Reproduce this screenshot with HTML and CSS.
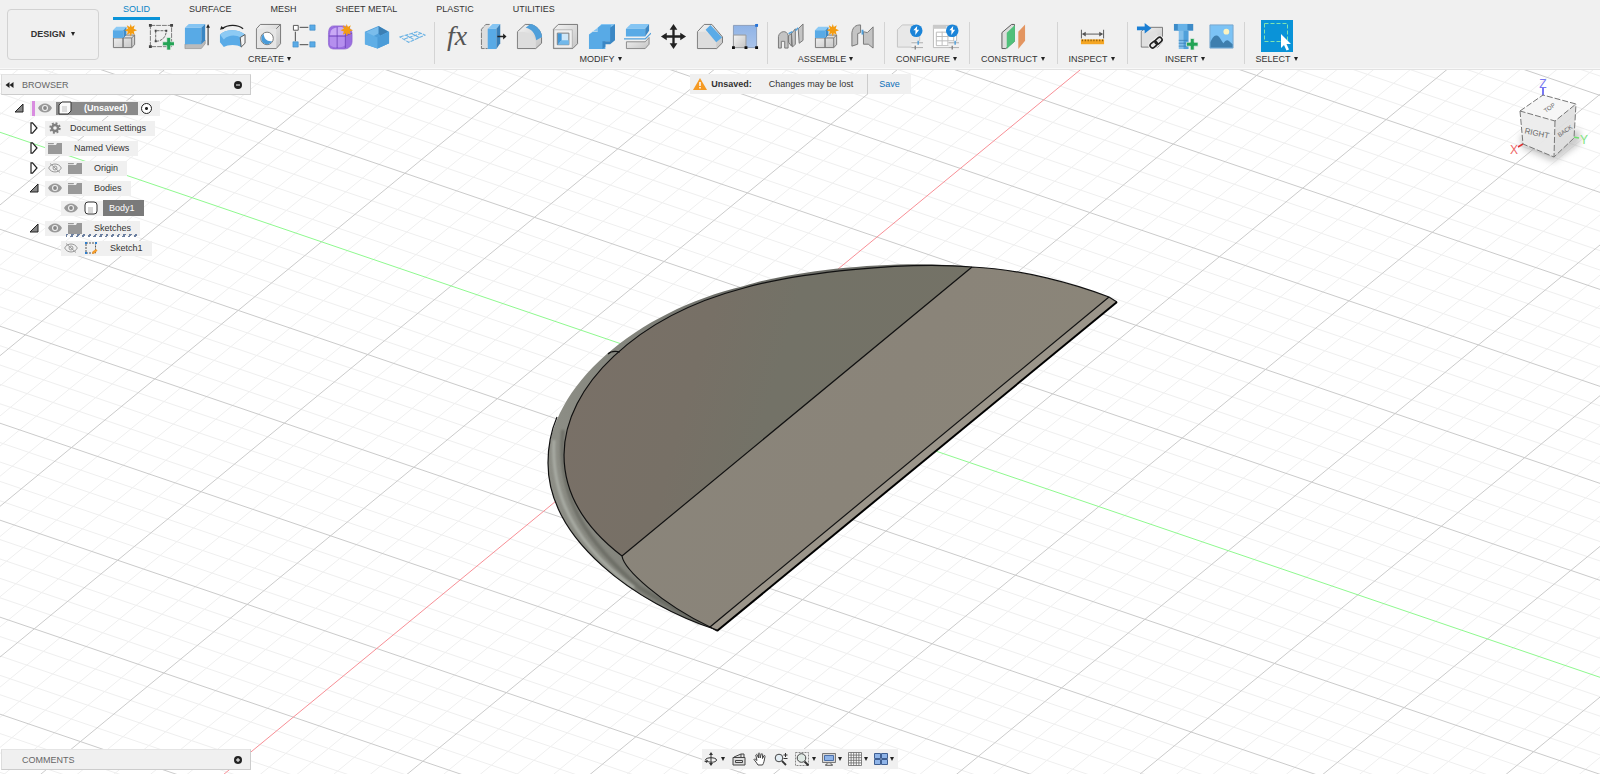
FILE: index.html
```html
<!DOCTYPE html>
<html lang="en">
<head>
<meta charset="utf-8">
<title>(Unsaved) - Design</title>
<meta name="viewport" content="width=device-width, initial-scale=1">
<link rel="stylesheet" href="styles.css">
</head>
<body>
<svg class="defs" aria-hidden="true">
  <defs>
    <linearGradient id="face-dark" x1="0" y1="0.4" x2="1" y2="0.6">
      <stop offset="0" stop-color="#797067"/><stop offset="0.3" stop-color="#777066"/><stop offset="0.5" stop-color="#737267"/><stop offset="1" stop-color="#747266"/>
    </linearGradient>
    <linearGradient id="face-light" x1="0" y1="0.3" x2="1" y2="0.7">
      <stop offset="0" stop-color="#8a857b"/><stop offset="0.5" stop-color="#8a8479"/><stop offset="1" stop-color="#8b8679"/>
    </linearGradient>
    <linearGradient id="rim" gradientUnits="userSpaceOnUse" x1="548" y1="0" x2="720" y2="0">
      <stop offset="0" stop-color="#8d8e86"/><stop offset="0.5" stop-color="#83847c"/><stop offset="1" stop-color="#6d6e68"/>
    </linearGradient>
    <linearGradient id="blue" x1="0" y1="0" x2="1" y2="1"><stop offset="0" stop-color="#76bcf0"/><stop offset="1" stop-color="#4a9bd8"/></linearGradient>
    <linearGradient id="grey" x1="0" y1="0" x2="1" y2="1"><stop offset="0" stop-color="#f4f4f4"/><stop offset="1" stop-color="#c4c4c4"/></linearGradient>
    <linearGradient id="scale-blue" x1="0" y1="0" x2="0" y2="1"><stop offset="0" stop-color="#8fb3e6"/><stop offset="1" stop-color="#a9c3ea"/></linearGradient>
    <filter id="soft" x="-50%" y="-50%" width="200%" height="200%"><feGaussianBlur stdDeviation="3"/></filter>
    <filter id="glint" x="-50%" y="-50%" width="200%" height="200%"><feGaussianBlur stdDeviation="1"/></filter>

    <symbol id="star" viewBox="0 0 12 12"><path fill="#f39c12" d="M6 0l1 3 2.800-1.700L8.800 4.500 12 6 8.800 7.300l1 3L7 8.900 6 12 5 8.900l-2.800 1.400 1-3L0 6l3.200-1.500-1-3.200L5 3z"/></symbol>
    <symbol id="component" viewBox="0 0 28 28">
      <path fill="url(#grey)" stroke="#777" d="M2.500 15.500h10v10h-10zM12.500 15.500l3-3h9v10l-3 3h-9zM21.500 15.500l3-3M12.500 15.500h9v10"/>
      <path fill="#8ccaf5" d="M2 7.500L5.500 4H16l-3 3.500z"/><path fill="#58aae6" d="M2 7.500h11v8H2z"/><path fill="#3b8ccb" d="M13 7.500L16 4v8l-3 3.500z"/>
      <use href="#star" x="14" y="1" width="13" height="13"/>
    </symbol>
    <symbol id="sketch" viewBox="0 0 28 28">
      <path fill="none" stroke="#777" stroke-dasharray="5 1" d="M3.500 2.500h22v22h-22z"/>
      <path fill="none" stroke="#666" stroke-dasharray="3 1" d="M9 19V8h11c0 6-4 11-11 11"/>
      <path fill="#444" d="M2 1h3v3H2zM24 1h3v3h-3zM2 23h3v3H2zM8 7h2v2H8zM8 18h2v2H8zM19 7h2v2h-2z"/>
      <path fill="#23a455" stroke="#f0f0f0" stroke-width=".7" d="M20.500 15h4v4.500h4v4h-4v4.500h-4v-4.500h-4.300v-4h4.300z"/>
    </symbol>
    <symbol id="extrude" viewBox="0 0 28 28">
      <path fill="#bbb" stroke="#888" stroke-width=".6" d="M2 22v4.500h17l4-5V18z"/>
      <path fill="#85c5f3" d="M2 5l4-4h17l-4 4z"/><path fill="#58aae6" d="M2 5h17v17H2z"/><path fill="#3a86c3" d="M19 5l4-4v17l-4 4z"/>
      <path fill="#222" d="M25.500 23V5H24l2-4 2 4h-1.500v18z"/>
    </symbol>
    <symbol id="revolve" viewBox="0 0 28 28">
      <path fill="none" stroke="#222" stroke-width="1.300" d="M3 6c6-4.500 16-5 22 0"/><path fill="#222" d="M1 7l1.500-4 3 3z"/>
      <path fill="#5aabe7" d="M1 12c6-6 19-6 26 0l-4 13c-4-3-14-3-18 0L1 20z"/><path fill="#8dcaf4" d="M1 12c6-6 19-6 26 0l-4.500 3.500C18 12 10 12 5 17z"/>
      <path fill="#f3f3f3" stroke="#555" d="M22 15l5-3v9l-4 4z"/>
    </symbol>
    <symbol id="hole" viewBox="0 0 28 28">
      <path fill="url(#grey)" stroke="#777" d="M1.500 6l4-4.500h21v20l-4.500 5H1.500zM22 6l4.500-4.500"/><path fill="#e6e6e6" d="M2 6h20v20H2z"/>
      <circle cx="12.500" cy="16" r="6.500" fill="#fff" stroke="#777"/><path fill="#4a9bd8" d="M9 11.200a6 6 0 1 0 8.900 7.500c-5 1-8.500-2-8.900-7.500z"/>
    </symbol>
    <symbol id="array" viewBox="0 0 28 28">
      <path stroke="#444" d="M9 4.500h9M4.500 9v10M9 22.500h9"/><path fill="#fff" stroke="#555" d="M2.500 2.500h5v5h-5z"/>
      <path fill="#5aabe7" stroke="#3a86c3" stroke-width=".6" d="M19.500 2h5.500v5.500h-5.500zM2 19.500h5.500V25H2zM19.500 19.500H25V25h-5.500z"/>
    </symbol>
    <symbol id="form" viewBox="0 0 28 28">
      <path fill="#9a6ee0" stroke="#8a60d0" stroke-width=".7" d="M7 3h9c6 0 10 3 10 9v7c0 5-4 8-8 8H8c-5 0-6.500-2-6.500-7v-8C1.500 6 3 3 7 3z"/>
      <path fill="#c9a9f5" d="M4 8c3-4 12-5 15-2v7H3z"/><path fill="#b58fee" d="M3 14h16v9c-4 3-12 3-16 0z"/>
      <path fill="none" stroke="#6a3fb5" stroke-width=".8" d="M2 13.500h17l7-3M10.500 4v22M19 6v20"/>
      <use href="#star" x="14" y="1" width="13" height="13"/>
    </symbol>
    <symbol id="base" viewBox="0 0 28 28">
      <path fill="#4f9fda" d="M2 9l14-6 11 6v12l-12 5.500L2 22z"/><path fill="#3b7fb4" d="M16 3l10 6-8 4-2-2z"/><path fill="#7abdec" d="M3 9.500L16 4v7l-6 3z"/><path fill="#5faee6" d="M2 9l13 6 12-6v12l-12 5.500L2 22z"/><path fill="#4b9cd8" d="M15 15l12-6v12l-12 5.500z"/>
    </symbol>
    <symbol id="plane-grid" viewBox="0 0 28 28"><path fill="none" stroke="#6ab2e4" stroke-width="1.100" stroke-dasharray="4 1" d="M1 14.500L19 9l8 3.500L10 20zM5.500 16.500l17-5.500M7 12.500l9 5M13 11l8 4"/></symbol>
    <symbol id="presspull" viewBox="0 0 28 28">
      <path fill="#ddd" stroke="#777" stroke-dasharray="6 1" d="M10 1.500H6l-4.500 5v20H8"/><path fill="#85c5f3" d="M8 6l5-5h8l-4 5z"/><path fill="#58aae6" d="M8 6h9v21H8z"/><path fill="#397fb8" d="M17 6l4-5v20l-4 6z"/>
      <path fill="#222" d="M18 13.200h6V11l3.500 3-3.500 3v-2.300h-6z"/>
    </symbol>
    <symbol id="fillet" viewBox="0 0 28 28"><path fill="url(#grey)" stroke="#777" d="M1.500 9l8-7.500h5c7 1 12 7 12 13.500v6l-6 5.500h-19z"/><path fill="#ddd" d="M2 9h3c9 0 14 4 15.500 10v7H2z"/><path fill="#4f9fda" d="M10 5l5-4c7 1 12 8 12 13.500L21 18C20 11 16 6 10 5z"/></symbol>
    <symbol id="shell" viewBox="0 0 28 28"><path fill="url(#grey)" stroke="#777" d="M1.500 6.500l5-5h20v20l-5 5h-20z"/><path fill="#efefef" stroke="#999" stroke-width=".6" d="M2 7h19v19H2z"/><path fill="#cfe7f8" stroke="#777" d="M5.500 10.500h12v12h-12z"/><path fill="#4497d6" d="M6 11h4v7l-4 4.500z"/><path fill="#72b8ea" d="M10 18h7.500v4.500H6z"/></symbol>
    <symbol id="combine" viewBox="0 0 28 28"><path fill="#85c5f3" d="M1 12l4-3.500h5V5l4-4h14l-4 4H10z"/><path fill="#58aae6" d="M1 12l4-3h5V5l4-3h10v17h-6v8H1z"/><path fill="#3b87c4" d="M23 5l5-4v17l-5 4h-5v2.500L15 27v-8h8z"/></symbol>
    <symbol id="split" viewBox="0 0 28 28"><path fill="#85c5f3" d="M2 6l5-5h19l-4 5z"/><path fill="#58aae6" d="M2 6h20v8H2z"/><path fill="#3b87c4" d="M22 6l4-5v7l-4 6z"/><path fill="none" stroke="#4f9fda" stroke-width="1.300" d="M0 16.500h22l6-6"/><path fill="url(#grey)" stroke="#888" d="M2.500 19.500H22l4-4.500v7l-4 4.500H2.500z"/></symbol>
    <symbol id="move" viewBox="0 0 28 28"><path fill="#222" d="M14 1l4 6h-2.800v5.800H21V10l6 4-6 4v-2.800h-5.800V21H18l-4 6-4-6h2.800v-5.800H7V18l-6-4 6-4v2.800h5.800V7H10z"/></symbol>
    <symbol id="chamfer" viewBox="0 0 28 28"><path fill="url(#grey)" stroke="#777" d="M1.500 9l7-7.500h8l11 13v6l-6 6h-20z"/><path fill="#ddd" d="M2 9h8l11 11v6H2z"/><path fill="#5aabe7" d="M10 7l5-5 12 13-6 5z"/></symbol>
    <symbol id="scale" viewBox="0 0 28 28"><path fill="url(#scale-blue)" stroke="#8a9cb8" d="M1.500 2.500h24v23h-24z"/><path fill="url(#grey)" stroke="#999" d="M1.500 12.500h13v13h-13z"/><path fill="#111" d="M0 24h3v3H0zM13 24h3v3h-3zM24 24h3v3h-3z"/><path fill="#2673d8" d="M24 1h3v3h-3z"/></symbol>
    <symbol id="joint" viewBox="0 0 28 28"><path fill="#c4c4c4" stroke="#777" d="M1.500 26V14c1-6 9-7 10-1v13H8v-7H4.500v7zM15 11l4-5v16l-3 3zM22 6l5-5v17l-4 3zM12 13l3-2v13l-3-4z"/><path stroke="#4f9fda" stroke-width="1.500" d="M12 11l4-2M19 8l3-3"/></symbol>
    <symbol id="asbuilt" viewBox="0 0 28 28"><path fill="#c4c4c4" stroke="#777" d="M3 24V10c1-6 4-8 9-8v8l-3 1v11zM15 9l4 1 6-6v22l-5-4h-5z"/><path stroke="#4f9fda" stroke-width="2" d="M14 7v5"/></symbol>
    <symbol id="badge" viewBox="0 0 14 14"><circle cx="7" cy="7" r="6.500" fill="#1b84d8"/><path fill="#fff" d="M8 2L4 6.500h2.200L6 11.500l4-5.500H7.600z"/></symbol>
    <symbol id="configure" viewBox="0 0 28 28"><path fill="#e8e8e8" stroke="#c4c4c4" d="M1.500 7l5-5h12l6 6v12l-4 5h-19z"/><use href="#badge" x="14" y="1" width="14" height="14"/><path stroke="#f0f0f0" stroke-width="8" d="M16 23h12"/><path stroke="#999" stroke-width=".8" d="M16 20.500h12M16 25.500h12"/><path stroke="#4f9fda" stroke-width="1.500" d="M23 18.500v4"/><path stroke="#888" stroke-width="1.500" d="M20 23.500v4"/></symbol>
    <symbol id="table" viewBox="0 0 28 28"><path fill="#fff" stroke="#bbb" d="M1.500 2.500h24v23h-24z"/><path fill="#c9c9c9" d="M1 2h14v4H1z"/><path fill="none" stroke="#bbb" d="M4.500 9.500h18v14h-18zM4.500 14h18M4.500 18.500h18M10.500 9v14M16.500 9v14"/><use href="#badge" x="14" y="1" width="14" height="14"/><path stroke="#f0f0f0" stroke-width="8" d="M17 23h11"/><path stroke="#999" stroke-width=".8" d="M17 20.500h11M17 25.500h11"/><path stroke="#4f9fda" stroke-width="1.500" d="M24 18.500v4"/><path stroke="#888" stroke-width="1.500" d="M21 23.500v4"/></symbol>
    <symbol id="planes" viewBox="0 0 28 28"><path fill="#ddd" stroke="#555" d="M2 26.500V10L12 1.500h3V19L6 26.500z"/><path fill="#4fc07a" d="M7 10l8.500-8v17L7 27z"/><path fill="#e39560" d="M19 9l7-7.500v17L19 27z"/></symbol>
    <symbol id="measure" viewBox="0 0 28 28"><path stroke="#555" d="M2.500 7v9M25.500 7v9M4 11.500h20"/><path fill="#555" d="M3 11.500L7 9v5zM25 11.500L21 9v5z"/><path fill="#f5a623" d="M2 17h24v5H2z"/><path stroke="#7a4e00" stroke-dasharray="1 2" stroke-width="2" d="M3 18h23"/></symbol>
    <symbol id="insert" viewBox="0 0 28 28"><path fill="url(#grey)" stroke="#777" d="M5.500 9l4-4.500h18V20l-5 5h-17z"/><path fill="#e0e0e0" d="M6 9h16v15H6z"/><path fill="#1b7fd4" d="M1 3.500h8V0l7 5.500L9 11V7.500H1z"/><g fill="none" stroke="#f0f0f0" stroke-width="4"><rect x="14" y="20" width="8" height="5" rx="2.500" transform="rotate(-40 18 22)"/><rect x="19" y="16" width="8" height="5" rx="2.500" transform="rotate(-40 23 18)"/></g><g fill="none" stroke="#222" stroke-width="1.700"><rect x="14" y="20" width="8" height="5" rx="2.500" transform="rotate(-40 18 22)"/><rect x="19" y="16" width="8" height="5" rx="2.500" transform="rotate(-40 23 18)"/></g></symbol>
    <symbol id="bolt" viewBox="0 0 28 28"><path fill="#3d8bc8" d="M2 1h20v7H2z"/><path fill="#66b2e8" d="M6 1h10v7H6z"/><path fill="#82bfeb" d="M7 8h10v19H7z"/><path fill="#4f9fda" d="M12 8h5v19h-5z"/><path stroke="#3d7fb5" stroke-width=".8" d="M7 18h9M7 21h9M7 24h9"/><path fill="#23a455" stroke="#f0f0f0" stroke-width=".7" d="M19 16h4v4h4v4h-4v4h-4v-4h-4v-4h4z"/></symbol>
    <symbol id="picture" viewBox="0 0 28 28"><path fill="#7cc3f5" stroke="#7aa7cc" d="M2 2h24v24H2z"/><path fill="#3f7fae" d="M2.500 20C5 14 7 13 9 13c3 0 5 6 7 8 2-3 4-4 6-2l3.500 3v3.500h-23z"/><circle cx="19" cy="9" r="3" fill="#fbf3c0"/></symbol>
    <symbol id="select" viewBox="0 0 32 32"><path fill="#0a93d8" d="M0 0h32v32H0z"/><path fill="none" stroke="#7fe3b0" stroke-dasharray="4 2" d="M3.500 3.500h23v18h-23z"/><path fill="#fff" d="M20 14v14l3-3 2.500 5.500 2.500-1-2.500-5.500H30z"/></symbol>

    <symbol id="eye" viewBox="0 0 14 10"><path fill="#999" d="M0 5c3-6 11-6 14 0-3 6-11 6-14 0z"/><circle cx="7" cy="5" r="3" fill="#f0f0f0"/><circle cx="7" cy="5" r="1.900" fill="#888"/></symbol>
    <symbol id="eye-off" viewBox="0 0 14 10"><path fill="none" stroke="#999" d="M.7 5C3-.3 11-.3 13.300 5 11 10.300 3 10.300.7 5zM2 .5l10 9"/><circle cx="7" cy="5" r="2" fill="none" stroke="#999"/></symbol>
    <symbol id="folder" viewBox="0 0 14 12"><path fill="#999" d="M0 3h8l1-2h5v11H0z"/><path fill="#999" d="M0 1h6l-.5 1.200H0z"/></symbol>
    <symbol id="gear" viewBox="0 0 14 14"><circle cx="7" cy="7" r="4.700" fill="none" stroke="#808080" stroke-width="2" stroke-dasharray="1.900 1.790"/><circle cx="7" cy="7" r="3" fill="none" stroke="#808080" stroke-width="2.400"/></symbol>
    <symbol id="cube" viewBox="0 0 14 14"><path fill="#fafafa" stroke="#333" d="M1 4l3-3h9v9l-3 3H1z"/><path fill="#dcdcdc" d="M4 5h5v6H4z"/></symbol>
    <symbol id="body" viewBox="0 0 14 14"><rect x="1" y="1" width="12" height="12" rx="3" fill="#fff" stroke="#333"/><path fill="#d8d8d8" d="M4 6h5v6H4z"/></symbol>
    <symbol id="sketch-small" viewBox="0 0 14 14"><path fill="none" stroke="#555" stroke-dasharray="2 1" d="M2 2h9.500v10H2z"/><path fill="#2f7fd0" d="M1 1h2v2H1zM11 1h2v2h-2zM1 11h2v2H1z"/><path fill="#f39c2b" d="M8 13l.5-2.500L12 8l1.500 1.500L10.500 12.500z"/></symbol>
    <symbol id="open" viewBox="0 0 10 10"><path fill="#888" stroke="#222" d="M9 1v8H1z"/></symbol>
    <symbol id="closed" viewBox="0 0 8 12"><path fill="#fff" stroke="#222" stroke-width="1.200" d="M1 .8h1.500L7 6l-4.500 5.200H1z"/></symbol>
    <symbol id="orbit" viewBox="0 0 14 14"><path fill="none" stroke="#333" d="M7 2v10M1.500 8c0-3 11-3 11 0s-8 2.500-10 1"/><path fill="#333" d="M7 0l2 3H5zM7 14l2-3H5zM0 9l4-1-1 3z"/></symbol>
    <symbol id="look" viewBox="0 0 14 14"><path fill="#ddd" stroke="#444" d="M1 5.500h12v7.500H1zM3.500 8.500h7v2h-7zM2 5l7-3v3M9 2h3v3"/></symbol>
    <symbol id="pan" viewBox="0 0 14 14"><path fill="#fff" stroke="#444" d="M5 13C4 11 2 9 1 7.500c.5-1 1.500-.5 3 1L2.800 3c.7-.9 1.300-.5 1.600.3L5.500 6 5.300 1.500c.6-.8 1.300-.6 1.500.2L7.200 6l1-4c.7-.7 1.400-.4 1.400.5L9.500 6.500l1.400-2.800c.8-.5 1.300 0 1.100.8C11.300 8 11 11 9.500 13z"/></symbol>
    <symbol id="zoom" viewBox="0 0 14 14"><circle cx="5" cy="6" r="3.800" fill="#e4eef5" stroke="#444"/><path stroke="#333" stroke-width="1.800" d="M8 9l4 4"/><path stroke="#333" d="M9.500 3h4M11.500 1v4M9.500 6.500h4"/></symbol>
    <symbol id="fit" viewBox="0 0 14 14"><path fill="none" stroke="#888" stroke-dasharray="2 1" d="M.5.500h13v13H.5z"/><circle cx="6.500" cy="6" r="4.300" fill="#dfe9e4" stroke="#444"/><path stroke="#333" stroke-width="2" d="M9.500 9.500l4 4"/></symbol>
    <symbol id="display" viewBox="0 0 14 14"><path fill="#d5d5d5" stroke="#777" d="M.5 1.500h13v9H.5zM5 10.500v2H3.500v1h7v-1H9v-2"/><path fill="#8fb4e8" stroke="#4b6fa8" d="M2.500 3.500h9v5h-9z"/></symbol>
    <symbol id="grid-icon" viewBox="0 0 14 14"><path fill="#fff" stroke="#666" stroke-width=".8" d="M.5.500h13v13H.5zM.5 3.100h13M.5 5.700h13M.5 8.300h13M.5 10.900h13M3.100.5v13M5.700.5v13M8.300.5v13M10.900.5v13"/></symbol>
    <symbol id="views" viewBox="0 0 14 14"><path fill="#8fb4e8" stroke="#3f5f92" d="M.5 1.500h6v5h-6zM7.500 1.500h6v5h-6zM.5 7.500h6v5h-6zM7.500 7.500h6v5h-6z"/></symbol>
  </defs>
</svg>

<div class="app">
  <svg class="scene" viewBox="0 0 1600 774" preserveAspectRatio="xMidYMid slice" role="img" aria-label="Half disc body on the ground plane">
    <path id="grid-minor" class="grid-minor"/>
    <path id="grid-major" class="grid-major"/>
    <path id="axis-x" class="axis-x"/>
    <path id="axis-y" class="axis-y"/>
    <path fill="url(#rim)" d="M717 630C636 604 548 540 548 463C548 386 637 311 744 286C797 269 905 259 972 267L800 480z"/>
    <path fill="none" stroke="#5f6059" stroke-width="4" opacity=".6" filter="url(#glint)" d="M563 430C556 500 590 545 640 588L700 623"/>
    <path fill="none" stroke="#a9aca4" stroke-width="3" filter="url(#glint)" d="M554 440C550 510 590 556 634 588"/>
    <path fill="url(#face-dark)" d="M972 267C905 261 797 273 744 288C637 316 564 386 564 455C564 497 588 530 622 556z"/>
    <path fill="url(#face-light)" d="M972 267C1022 269 1075 284 1109 297L710 627C660 603 624 569 622 556z"/>
    <path fill="#9b958a" d="M1109 297L1117 302 717 631 710 627z"/>
    <g class="edge">
      <path d="M717 630C636 604 548 540 548 463C548 446 551 431 557 417"/>
      <path d="M972 267C905 261 797 273 744 288C637 316 564 386 564 455C564 497 588 530 622 556C624 569 660 603 710 627"/>
      <path d="M972 267C1022 269 1075 284 1109 297L1117 302M972 267L622 556M1109 297L710 627L717 631M608 354q4-4 12-2"/>
      <path class="heavy" d="M1117 302L717 631"/>
    </g>
  </svg>

  <header class="toolbar">
    <button class="workspace caret" type="button">DESIGN</button>
    <div class="ribbon">
      <nav class="tabs" aria-label="Toolbar tabs">
        <button class="tab active" type="button">SOLID</button>
        <button class="tab" type="button">SURFACE</button>
        <button class="tab" type="button">MESH</button>
        <button class="tab" type="button">SHEET METAL</button>
        <button class="tab" type="button">PLASTIC</button>
        <button class="tab" type="button">UTILITIES</button>
      </nav>
      <div class="groups">
        <section class="group">
          <div class="tools">
            <button class="tool" type="button" aria-label="New component"><svg><use href="#component"/></svg></button>
            <button class="tool" type="button" aria-label="Create sketch"><svg><use href="#sketch"/></svg></button>
            <button class="tool" type="button" aria-label="Extrude"><svg><use href="#extrude"/></svg></button>
            <button class="tool" type="button" aria-label="Revolve"><svg><use href="#revolve"/></svg></button>
            <button class="tool" type="button" aria-label="Hole"><svg><use href="#hole"/></svg></button>
            <button class="tool" type="button" aria-label="Pattern"><svg><use href="#array"/></svg></button>
            <button class="tool" type="button" aria-label="Create form"><svg><use href="#form"/></svg></button>
            <button class="tool" type="button" aria-label="Base feature"><svg><use href="#base"/></svg></button>
            <button class="tool" type="button" aria-label="Mesh plane"><svg><use href="#plane-grid"/></svg></button>
          </div>
          <button class="menu caret" type="button">CREATE</button>
        </section>
        <section class="group">
          <div class="tools">
            <button class="tool fx" type="button" aria-label="Change parameters">fx</button>
            <button class="tool" type="button" aria-label="Press pull"><svg><use href="#presspull"/></svg></button>
            <button class="tool" type="button" aria-label="Fillet"><svg><use href="#fillet"/></svg></button>
            <button class="tool" type="button" aria-label="Shell"><svg><use href="#shell"/></svg></button>
            <button class="tool" type="button" aria-label="Combine"><svg><use href="#combine"/></svg></button>
            <button class="tool" type="button" aria-label="Split body"><svg><use href="#split"/></svg></button>
            <button class="tool" type="button" aria-label="Move"><svg><use href="#move"/></svg></button>
            <button class="tool" type="button" aria-label="Chamfer"><svg><use href="#chamfer"/></svg></button>
            <button class="tool" type="button" aria-label="Scale"><svg><use href="#scale"/></svg></button>
          </div>
          <button class="menu caret" type="button">MODIFY</button>
        </section>
        <section class="group">
          <div class="tools">
            <button class="tool" type="button" aria-label="Joint"><svg><use href="#joint"/></svg></button>
            <button class="tool" type="button" aria-label="New assembly component"><svg><use href="#component"/></svg></button>
            <button class="tool" type="button" aria-label="As-built joint"><svg><use href="#asbuilt"/></svg></button>
          </div>
          <button class="menu caret" type="button">ASSEMBLE</button>
        </section>
        <section class="group">
          <div class="tools">
            <button class="tool" type="button" aria-label="Configure design"><svg><use href="#configure"/></svg></button>
            <button class="tool" type="button" aria-label="Configuration table"><svg><use href="#table"/></svg></button>
          </div>
          <button class="menu caret" type="button">CONFIGURE</button>
        </section>
        <section class="group">
          <div class="tools"><button class="tool" type="button" aria-label="Offset plane"><svg><use href="#planes"/></svg></button></div>
          <button class="menu caret" type="button">CONSTRUCT</button>
        </section>
        <section class="group">
          <div class="tools"><button class="tool" type="button" aria-label="Measure"><svg><use href="#measure"/></svg></button></div>
          <button class="menu caret" type="button">INSPECT</button>
        </section>
        <section class="group">
          <div class="tools">
            <button class="tool" type="button" aria-label="Insert derive"><svg><use href="#insert"/></svg></button>
            <button class="tool" type="button" aria-label="Insert fastener"><svg><use href="#bolt"/></svg></button>
            <button class="tool" type="button" aria-label="Insert image"><svg><use href="#picture"/></svg></button>
          </div>
          <button class="menu caret" type="button">INSERT</button>
        </section>
        <section class="group">
          <div class="tools"><button class="tool full" type="button" aria-label="Window selection"><svg><use href="#select"/></svg></button></div>
          <button class="menu caret" type="button">SELECT</button>
        </section>
      </div>
    </div>
  </header>

  <main class="viewport">
    <aside class="browser">
      <div class="panel">
        <svg class="chevrons" viewBox="0 0 8 6"><path d="M4 0v6L0 3zM8 0v6L4 3z"/></svg>
        <h2>BROWSER</h2>
        <button class="round" type="button" aria-label="Collapse browser"><svg viewBox="0 0 8 8"><circle cx="4" cy="4" r="4"/><path d="M2 4h4"/></svg></button>
      </div>
      <ul class="tree">
        <li class="row root"><svg class="twist"><use href="#open"/></svg><div class="item"><i class="mark"></i><svg class="eye"><use href="#eye"/></svg><span class="chip"><svg class="kind"><use href="#cube"/></svg><b>(Unsaved)</b></span><input type="radio" checked aria-label="Activate (Unsaved)"></div></li>
        <li class="row l1"><svg class="twist"><use href="#closed"/></svg><div class="item"><svg class="kind"><use href="#gear"/></svg><span>Document Settings</span></div></li>
        <li class="row l1"><svg class="twist"><use href="#closed"/></svg><div class="item"><svg class="kind"><use href="#folder"/></svg><span class="deep">Named Views</span></div></li>
        <li class="row l1"><svg class="twist"><use href="#closed"/></svg><div class="item"><svg class="eye"><use href="#eye-off"/></svg><svg class="kind"><use href="#folder"/></svg><span class="deep">Origin</span></div></li>
        <li class="row l1"><svg class="twist"><use href="#open"/></svg><div class="item"><svg class="eye"><use href="#eye"/></svg><svg class="kind"><use href="#folder"/></svg><span class="deep">Bodies</span></div></li>
        <li class="row l2"><div class="item selected"><svg class="eye"><use href="#eye"/></svg><svg class="kind"><use href="#body"/></svg><span class="pick">Body1</span></div></li>
        <li class="row l1"><svg class="twist"><use href="#open"/></svg><div class="item hatched"><svg class="eye"><use href="#eye"/></svg><svg class="kind"><use href="#folder"/></svg><span class="deep">Sketches</span></div></li>
        <li class="row l2"><div class="item"><svg class="eye"><use href="#eye-off"/></svg><svg class="kind"><use href="#sketch-small"/></svg><span class="deep">Sketch1</span></div></li>
      </ul>
    </aside>

    <div class="notice" role="status">
      <svg class="warn" viewBox="0 0 14 12"><path fill="#f59a23" d="M7 0l7 12H0z"/><path stroke="#fff" stroke-width="1.500" d="M7 4v4M7 9v1.500"/></svg>
      <strong>Unsaved:</strong>
      <span>Changes may be lost</span>
      <button type="button">Save</button>
    </div>

    <svg class="viewcube" viewBox="1500 74 90 100" role="img" aria-label="View cube">
      <path d="M1520 135L1522 148 1554 162 1580 144 1580 130z" fill="#999" opacity=".5" filter="url(#soft)"/>
      <path stroke="#4a4af0" stroke-width="1.500" d="M1543 88v8"/><path stroke="#e03030" stroke-width="1.500" d="M1523 144l-5 3"/><path stroke="#70e070" stroke-width="1.500" d="M1573 137l6 1"/>
      <g fill-opacity=".92"><path fill="#f5f5f5" d="M1520 111l23-16 33 9-21 17z"/><path fill="#ebebeb" d="M1520 111l35 10-1 36-31-13z"/><path fill="#e0e0e0" d="M1555 121l21-17-2 34-20 19z"/></g>
      <path fill="none" stroke="#777" stroke-dasharray="6 2" d="M1520 111l23-16 33 9-21 17zM1520 111l3 33 31 13 20-19 2-34M1555 121l-1 36"/>
      <text class="axis z" x="1543" y="88">Z</text><text class="axis x" x="1514" y="154">X</text><text class="axis y" x="1584" y="144">Y</text>
      <text class="face" x="1537" y="136" transform="rotate(12 1537 133)">RIGHT</text>
      <text class="face small" x="1565" y="133" transform="rotate(-35 1565 131)">BACK</text>
      <text class="face small" x="1549" y="110" transform="rotate(-35 1549 107)">TOP</text>
    </svg>

    <div class="panel comments">
      <h2>COMMENTS</h2>
      <button class="round" type="button" aria-label="Expand comments"><svg viewBox="0 0 8 8"><circle cx="4" cy="4" r="4"/><path d="M2 4h4M4 2v4"/></svg></button>
    </div>

    <nav class="navbar" aria-label="Navigation">
      <button class="caret" type="button" aria-label="Orbit"><svg><use href="#orbit"/></svg></button>
      <button type="button" aria-label="Look at"><svg><use href="#look"/></svg></button>
      <button type="button" aria-label="Pan"><svg><use href="#pan"/></svg></button>
      <button type="button" aria-label="Zoom"><svg><use href="#zoom"/></svg></button>
      <button class="caret" type="button" aria-label="Fit"><svg><use href="#fit"/></svg></button>
      <button class="caret tight" type="button" aria-label="Display settings"><svg><use href="#display"/></svg></button>
      <button class="caret tight" type="button" aria-label="Grid and snaps"><svg><use href="#grid-icon"/></svg></button>
      <button class="caret tight" type="button" aria-label="Viewports"><svg><use href="#views"/></svg></button>
    </nav>
  </main>
</div>
<script src="grid.js"></script>
</body>
</html>
```
FILE: styles.css
```css
* { box-sizing: border-box; }

body {
  margin: 0;
  background: #fff;
  color: #333;
  font: 9px/12px "Liberation Sans", Arial, sans-serif;
}

button {
  margin: 0;
  padding: 0;
  border: 0;
  background: none;
  color: inherit;
  font: inherit;
}

.defs { position: absolute; width: 0; height: 0; }

.app {
  position: relative;
  display: flex;
  flex-direction: column;
  min-height: 100vh;
  overflow: hidden;
}

/* 3D scene behind the panels */
.scene { position: absolute; inset: 0; width: 100%; height: 100%; }
.grid-minor, .grid-major, .axis-x, .axis-y, .edge path { vector-effect: non-scaling-stroke; fill: none; }
.grid-minor { stroke: #efefef; }
.grid-major { stroke: #cbcbcb; }
.axis-x { stroke: #f88f96; }
.axis-y { stroke: #8ff98f; }
.edge path { stroke: #111; stroke-width: 1.2px; }
.edge .heavy { stroke: #000; stroke-width: 2px; }

/* Toolbar */
.toolbar {
  position: relative;
  display: flex;
  gap: 7px;
  height: 70px;
  padding-left: 7px;
  background: #f0f0f0;
  border-bottom: 1px solid #e2e2e2;
  box-shadow: inset 0 -1px #f8f8f8;
}

.workspace {
  width: 92px;
  height: 51px;
  margin-top: 9px;
  padding-bottom: 2px;
  border: 1px solid #d2d2d2;
  border-radius: 4px;
  font-weight: bold;
}

.caret::after {
  content: "";
  display: inline-block;
  margin-left: 3px;
  border: 2px solid transparent;
  border-top: 4px solid #222;
  border-bottom: 0;
  vertical-align: 1px;
}
.workspace.caret::after { margin-left: 6px; }

.tabs { display: flex; gap: 19px; height: 20px; padding-left: 7px; }
.tab { height: 20px; padding: 0 10px; border-bottom: 3px solid transparent; }
.tab.active { border-color: #0a93d8; color: #0a84c6; }

.groups { display: flex; }
.group { display: flex; flex-direction: column; align-items: center; position: relative; padding-right: 1px; }
.group + .group::before {
  content: "";
  position: absolute;
  left: -1px;
  top: 2px;
  bottom: 2px;
  width: 1px;
  background: #d4d4d4;
}
.tools { display: flex; height: 32px; padding: 0 4px; }
.group:first-child .tools { padding-left: 0; }
.tool { display: grid; place-items: center; width: 36px; height: 32px; }
.tool svg { display: block; width: 27px; height: 27px; }
.tool.full svg { width: 32px; height: 32px; }
.tool.fx { color: #555; font: italic 28px/28px "Liberation Serif", serif; }
.menu { height: 14px; padding: 0 12px 0 11px; }

/* Viewport overlays */
.viewport {
  position: relative;
  flex: 1;
  display: grid;
  grid-template-columns: 1fr auto 1fr;
  grid-template-rows: 1fr auto;
  align-items: start;
  padding: 4px 0 4px 1px;
}

.panel {
  display: flex;
  align-items: center;
  width: 250px;
  height: 21px;
  padding: 0 8px 0 3px;
  background: #f0f0f0;
  border: 1px solid #ccc;
  border-top-color: #e4e4e4;
  border-left-color: #ddd;
}
.panel h2 { flex: 1; margin: 0; color: #666; font: inherit; }
.panel.comments { grid-row: 2; padding-left: 20px; }
.chevrons { width: 9px; height: 6px; margin-right: 8px; fill: #222; }
.round svg { display: block; width: 8px; height: 8px; }
.round circle { fill: #222; }
.round path { stroke: #fff; }

.tree { margin: 3px 0 0; padding: 0; list-style: none; }
.row { display: flex; align-items: center; height: 20px; }
.root { padding-left: 13px; }
.l1 { padding-left: 28px; }
.l2 { padding-left: 60px; }
.twist { width: 10px; height: 10px; margin-right: 6px; }
.l1 .twist { height: 12px; }
.item { display: flex; align-items: center; height: 15px; padding: 0 9px 0 3px; background: #f0f0f0; }
.item .eye { width: 14px; height: 10px; margin-right: 6px; }
.item .kind { width: 14px; height: 14px; margin-right: 8px; }
.item .deep { margin-left: 4px; }
.root .item { padding: 0 8px 0 2px; }
.root .eye { margin-right: 4px; }
.mark { width: 3px; height: 15px; margin-right: 3px; background: #d98ce0; }
.chip { display: flex; align-items: center; height: 13px; padding: 0 10px 0 2px; background: #8a8a8a; color: #fff; }
.chip .kind { margin-right: 12px; }
.chip b { font-weight: bold; }
.root input {
  appearance: none;
  width: 11px;
  height: 11px;
  margin: 0 0 0 3px;
  border: 1px solid #222;
  border-radius: 50%;
  background: radial-gradient(circle, #222 1px, #fff 2px);
}
.selected { padding-right: 0; }
.selected .kind { margin-right: 5px; }
.pick { padding: 2px 9px 2px 6px; background: #7a7a7a; color: #fff; }
.hatched { position: relative; }
.hatched::after {
  content: "";
  position: absolute;
  left: 21px;
  right: 0;
  bottom: -1px;
  height: 3px;
  background: repeating-linear-gradient(120deg, #6b7fa0 0 2px, transparent 2px 5px);
}

.notice {
  grid-column: 2;
  display: flex;
  align-items: center;
  height: 20px;
  padding-left: 3px;
  background: #f0f0f0;
}
.warn { width: 14px; height: 12px; margin-right: 4px; }
.notice span { padding: 0 14px 0 17px; }
.notice button { height: 20px; padding: 0 11px 0 11px; border-left: 1px solid #ccc; color: #0a6fb8; }

.viewcube { grid-column: 3; grid-row: 1; justify-self: end; width: 90px; height: 100px; margin-right: 10px; }
.axis { font: 12px "Liberation Sans", sans-serif; text-anchor: middle; }
.axis.x { fill: #ee6666; }
.axis.y { fill: #80e680; }
.axis.z { fill: #7878f0; }
.face { fill: #666; font: 8px "Liberation Sans", sans-serif; text-anchor: middle; }
.face.small { font-size: 6px; }

.navbar {
  grid-column: 2;
  grid-row: 2;
  justify-self: center;
  display: flex;
  align-items: center;
  gap: 7px;
  height: 20px;
  padding: 0 4px 0 2px;
  background: #f0f0f0;
}
.navbar button { display: flex; align-items: center; }
.navbar svg { width: 14px; height: 14px; }
.navbar .caret::after { margin-left: 3px; }
.navbar .tight::after { margin-left: 2px; }
.navbar .caret + .tight { margin-left: -1px; }
```
FILE: grid.js
```js
// Ground plane in an orthographic view: one major cell spans U along Y and V along X.
const origin = [710.2, 374.2];
const U = [129.54, 44.13];
const V = [83.37, -68.58];
const reach = 14;

const at = (u, v) =>
  (origin[0] + u * U[0] + v * V[0]).toFixed(1) + " " +
  (origin[1] + u * U[1] + v * V[1]).toFixed(1);
const alongU = (v) => `M${at(-reach, v)}L${at(reach, v)}`;
const alongV = (u) => `M${at(u, -reach)}L${at(u, reach)}`;

let minor = "";
let major = "";
for (let i = -reach * 5; i <= reach * 5; i++) {
  if (i === 0) continue;
  const lines = alongU(i / 5) + alongV(i / 5);
  if (i % 5) minor += lines;
  else major += lines;
}

document.getElementById("grid-minor").setAttribute("d", minor);
document.getElementById("grid-major").setAttribute("d", major);
document.getElementById("axis-x").setAttribute("d", alongV(0));
document.getElementById("axis-y").setAttribute("d", alongU(0));
```
